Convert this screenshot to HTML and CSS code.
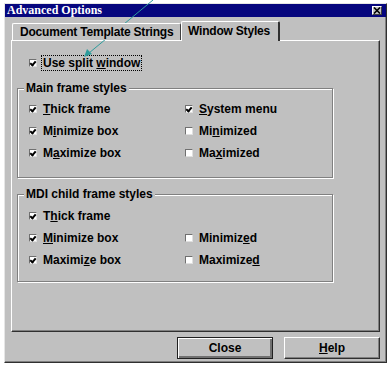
FILE: index.html
```html
<!DOCTYPE html>
<html>
<head>
<meta charset="utf-8">
<link rel="stylesheet" href="styles.css">
</head>
<body>
<div class="dialog">
  <div class="titlebar">
    <span class="title">Advanced Options</span>
    <span class="xbtn"><svg width="8" height="7" viewBox="0 0 8 7"><path d="M1 0.5 L7 6.5 M7 0.5 L1 6.5" stroke="#000" stroke-width="1.6"/></svg></span>
  </div>
  <div class="body">
    <div class="tabs">
      <div class="tab">Document Template Strings</div>
      <div class="tab active">Window Styles</div>
    </div>
    <div class="panel">
      <div class="split">
        <span class="cb on"></span>
        <span class="focus">Use split <u>w</u>indow</span>
      </div>
      <fieldset class="group main">
        <legend>Main frame styles</legend>
        <div class="grid">
          <div class="item"><span class="cb on"></span><span><u>T</u>hick frame</span></div>
          <div class="item"><span class="cb on"></span><span><u>S</u>ystem menu</span></div>
          <div class="item"><span class="cb on"></span><span>M<u>i</u>nimize box</span></div>
          <div class="item"><span class="cb"></span><span>Mi<u>n</u>imized</span></div>
          <div class="item"><span class="cb on"></span><span>M<u>a</u>ximize box</span></div>
          <div class="item"><span class="cb"></span><span>Ma<u>x</u>imized</span></div>
        </div>
      </fieldset>
      <fieldset class="group mdi">
        <legend>MDI child frame styles</legend>
        <div class="grid">
          <div class="item"><span class="cb on"></span><span>T<u>h</u>ick frame</span></div>
          <div class="item"></div>
          <div class="item"><span class="cb on"></span><span><u>M</u>inimize box</span></div>
          <div class="item"><span class="cb"></span><span>Minimiz<u>e</u>d</span></div>
          <div class="item"><span class="cb on"></span><span>Maximi<u>z</u>e box</span></div>
          <div class="item"><span class="cb"></span><span>Maximize<u>d</u></span></div>
        </div>
      </fieldset>
    </div>
    <div class="buttons">
      <div class="btn default">Close</div>
      <div class="btn"><span><u>H</u>elp</span></div>
    </div>
  </div>
</div>
<svg class="arrow" width="391" height="366" viewBox="0 0 391 366">
  <line x1="153" y1="0" x2="89" y2="53" stroke="#2e9c9c" stroke-width="1"/>
  <path d="M84 57 L87 49 L92 54 Z" fill="#2e9c9c"/>
</svg>
</body>
</html>
```

FILE: styles.css
```css
html, body {
  margin: 0;
  padding: 0;
}
body {
  background: #fff;
  width: 391px;
  height: 366px;
  overflow: hidden;
  position: relative;
  font-family: "Liberation Sans", Arial, sans-serif;
  font-weight: bold;
  font-size: 12px;
  color: #000;
}
.dialog {
  margin: 3px 0 0 4px;
  width: 383px;
  height: 360px;
  box-sizing: border-box;
  background: #c0c0c0;
  border: 1px solid;
  border-color: #e6e6e6 #303030 #303030 #e6e6e6;
  box-shadow: inset -1px -1px #808080;
  display: flex;
  flex-direction: column;
}
.titlebar {
  height: 13px;
  background: #06067e;
  color: #fff;
  display: flex;
  align-items: center;
  justify-content: space-between;
  padding: 0 4px 0 2px;
}
.title {
  font-family: "Liberation Serif", "Times New Roman", serif;
  font-weight: bold;
  font-size: 12px;
  line-height: 13px;
}
.xbtn {
  width: 10px;
  height: 9px;
  box-sizing: border-box;
  background: #c4c4c4;
  border: 1px solid;
  border-color: #fff #404040 #404040 #fff;
  display: flex;
  align-items: center;
  justify-content: center;
}
.body {
  flex: 1;
  padding: 4px 6px 0 6px;
  display: flex;
  flex-direction: column;
}
.tabs {
  display: flex;
  align-items: flex-end;
  height: 19px;
  padding-left: 1px;
  position: relative;
  z-index: 1;
}
.tab {
  height: 17px;
  width: 169px;
  box-sizing: border-box;
  border-top: 1px solid #fff;
  border-left: 1px solid #fff;
  border-right: 1px solid #404040;
  border-radius: 2px 2px 0 0;
  padding-left: 7px;
  line-height: 16px;
  background: #c0c0c0;
  white-space: nowrap;
  letter-spacing: -0.2px;
}
.tab.active {
  width: 99px;
  height: 20px;
  padding-left: 6px;
  margin-bottom: -1px;
  line-height: 18px;
  border-right: 2px solid #303030;
}
.panel {
  height: 292px;
  box-sizing: border-box;
  border: 1px solid;
  border-color: #fff #303030 #303030 #fff;
  box-shadow: inset -1px -1px #808080;
  padding-top: 14px;
}
.split {
  display: flex;
  align-items: center;
  height: 16px;
  padding-left: 17px;
  gap: 4px;
}
.focus {
  border: 1px dotted #000;
  padding: 0 1px;
  line-height: 14px;
}
.cb {
  width: 8px;
  height: 8px;
  flex: none;
  box-sizing: border-box;
  background: #fff;
  border-top: 1px solid #707070;
  border-left: 1px solid #707070;
  border-right: 1px solid #e0e0e0;
  border-bottom: 1px solid #e0e0e0;
  position: relative;
}
.cb.on::after {
  content: "";
  position: absolute;
  left: 1px;
  top: 0px;
  width: 2px;
  height: 4px;
  border-right: 2px solid #000;
  border-bottom: 2px solid #000;
  transform: rotate(40deg);
}
.group {
  width: 316px;
  box-sizing: border-box;
  margin: 0 0 0 5px;
  border: 1px solid #808080;
  box-shadow: inset 1px 1px #fff, 1px 1px #fff;
  padding: 3px 0 13px 6px;
  min-inline-size: 0;
}
.group.main {
  margin-top: 10px;
}
.group.mdi {
  margin-top: 9px;
  padding-top: 4px;
  padding-bottom: 10px;
}
legend {
  padding: 0 2px;
  line-height: 14px;
  background: #c0c0c0;
}
.grid {
  display: grid;
  grid-template-columns: 156px 1fr;
  grid-auto-rows: 22px;
  padding-left: 5px;
}
.item {
  display: flex;
  align-items: center;
  gap: 6px;
}
.buttons {
  margin-top: 5px;
  display: flex;
  justify-content: flex-end;
  gap: 11px;
}
.btn {
  width: 96px;
  height: 22px;
  box-sizing: border-box;
  display: flex;
  align-items: center;
  justify-content: center;
  border: 1px solid;
  border-color: #fff #303030 #303030 #fff;
  box-shadow: inset -1px -1px #808080;
}
.btn.default {
  border: 1px solid #202020;
  box-shadow: inset 1px 1px #fff, inset -2px -2px #707070;
}
.arrow {
  position: absolute;
  left: 0;
  top: 0;
  pointer-events: none;
}
```
